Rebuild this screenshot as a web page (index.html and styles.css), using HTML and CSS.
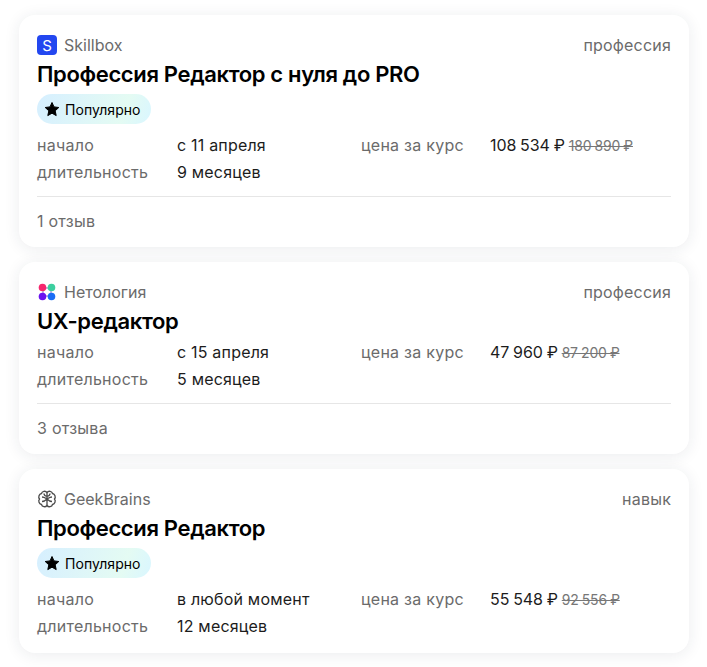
FILE: index.html
```html
<!DOCTYPE html>
<html>
<head>
    <title>Курсы</title>
    <link rel="stylesheet" href="styles.css">
</head>
<body>
    <div class="course-list">
        <div class="card">
            <div class="card-top">
                <div class="school">
                    <svg class="school-logo" viewBox="0 0 20 20">
                        <rect width="20" height="20" rx="4" fill="#2347f0"/>
                        <text x="10" y="15.500" text-anchor="middle" class="logo-letter">S</text>
                    </svg>
                    <span>Skillbox</span>
                </div>
                <div class="course-type">профессия</div>
            </div>
            <h2>Профессия Редактор с нуля до PRO</h2>
            <div class="badge">
                <svg class="star" viewBox="0 0 16 16"><path d="M8 1.500l2 4.400 4.800.6-3.600 3.300 1 4.800L8 12.200l-4.200 2.400 1-4.800L1.200 6.500 6 5.900z"/></svg>
                Популярно
            </div>
            <div class="info">
                <div class="label">начало</div>
                <div class="value">с 11 апреля</div>
                <div class="label">цена за курс</div>
                <div class="price">108 534 ₽ <s class="old-price">180 890 ₽</s></div>
                <div class="label">длительность</div>
                <div class="value">9 месяцев</div>
            </div>
            <div class="reviews">1 отзыв</div>
        </div>

        <div class="card">
            <div class="card-top">
                <div class="school">
                    <svg class="school-logo" viewBox="0 0 20 20">
                        <path d="M6 6h8v8H6z" fill="none" stroke="#8a6bd0" stroke-width="1"/>
                        <circle cx="5.500" cy="5.500" r="3.800" fill="#f5286e"/>
                        <circle cx="14.500" cy="5.500" r="3.800" fill="#3ccf9f"/>
                        <circle cx="5.500" cy="14.500" r="3.800" fill="#6a12f0"/>
                        <circle cx="14.500" cy="14.500" r="3.800" fill="#1a6cf5"/>
                    </svg>
                    <span>Нетология</span>
                </div>
                <div class="course-type">профессия</div>
            </div>
            <h2>UX-редактор</h2>
            <div class="info">
                <div class="label">начало</div>
                <div class="value">с 15 апреля</div>
                <div class="label">цена за курс</div>
                <div class="price">47 960 ₽ <s class="old-price">87 200 ₽</s></div>
                <div class="label">длительность</div>
                <div class="value">5 месяцев</div>
            </div>
            <div class="reviews">3 отзыва</div>
        </div>

        <div class="card">
            <div class="card-top">
                <div class="school">
                    <svg class="school-logo" viewBox="0 0 20 20" fill="none" stroke="#4a4a4a" stroke-width="1.300">
                        <path d="M10 3.500C8.500 1.500 5 2 4.500 4.500 2 5 1 8 2.500 10 1 12 2 15 4.500 15.500 5 18 8.500 18.500 10 16.500 11.500 18.500 15 18 15.500 15.500 18 15 19 12 17.500 10 19 8 18 5 15.500 4.500 15 2 11.500 1.500 10 3.500z"/>
                        <path d="M10 3.500v13M5 8c2 0 3 .8 5 2M15 8c-2 0-3 .8-5 2M5 12.500c1.500 0 3-.5 5-2.500M15 12.500c-1.500 0-3-.5-5-2.500M7 4.500c0 1.500.8 2.300 3 3M13 4.500c0 1.500-.8 2.300-3 3"/>
                    </svg>
                    <span>GeekBrains</span>
                </div>
                <div class="course-type">навык</div>
            </div>
            <h2>Профессия Редактор</h2>
            <div class="badge">
                <svg class="star" viewBox="0 0 16 16"><path d="M8 1.500l2 4.400 4.800.6-3.600 3.300 1 4.800L8 12.200l-4.200 2.400 1-4.800L1.200 6.500 6 5.900z"/></svg>
                Популярно
            </div>
            <div class="info">
                <div class="label">начало</div>
                <div class="value">в любой момент</div>
                <div class="label">цена за курс</div>
                <div class="price">55 548 ₽ <s class="old-price">92 556 ₽</s></div>
                <div class="label">длительность</div>
                <div class="value">12 месяцев</div>
            </div>
        </div>
    </div>
</body>
</html>
```

FILE: styles.css
```css
body {
    font-family: Inter, "Noto Sans", sans-serif;
    margin: 0;
    background-color: #fff;
    color: #1c1c1c;
    font-size: 16px;
}
.course-list {
    display: flex;
    flex-direction: column;
    gap: 15px;
    padding: 15px 18px 14px 19px;
}
.card {
    background-color: #fff;
    border-radius: 16px;
    padding: 20px 18px 16px;
    box-shadow: 0 2px 16px rgba(30, 40, 70, 0.09);
}
.card:last-child {
    padding-bottom: 14px;
}
.card-top {
    display: flex;
    justify-content: space-between;
    align-items: center;
    height: 20px;
    color: #6b6b6b;
}
.school {
    display: flex;
    align-items: center;
    gap: 7px;
}
.school-logo {
    width: 20px;
    height: 20px;
}
.logo-letter {
    fill: #fff;
    font-size: 15px;
    stroke: none;
    font-family: Inter, sans-serif;
}
.course-type {
    letter-spacing: 0.2px;
}
h2 {
    margin: 5px 0 0;
    font-size: 22px;
    line-height: 28px;
    font-weight: 600;
    color: #000;
    letter-spacing: -0.35px;
}
.badge {
    display: flex;
    align-items: center;
    gap: 5px;
    width: fit-content;
    height: 30px;
    margin: 6px 0 7px;
    padding: 0 10px 0 7px;
    border-radius: 15px;
    font-size: 14px;
    letter-spacing: 0.05px;
    color: #000;
    background: linear-gradient(110deg, #d6efff, #e4fbf3 75%, #d9f6ff);
}
.star {
    width: 16px;
    height: 16px;
    stroke: #000;
    stroke-width: 1;
    stroke-linejoin: round;
}
.info {
    display: grid;
    grid-template-columns: 140px 184px 129px 1fr;
    grid-auto-rows: 27px;
    align-items: center;
    margin-top: 3px;
}
.label {
    color: #6b6b6b;
    letter-spacing: 0.25px;
}
.value {
    letter-spacing: 0.2px;
}
.price {
    letter-spacing: -0.1px;
    word-spacing: -0.5px;
}
.old-price {
    font-size: 14px;
    color: #777;
    letter-spacing: -0.2px;
}
.reviews {
    margin-top: 11px;
    padding-top: 14px;
    border-top: 1px solid #e6e6e6;
    color: #6b6b6b;
    line-height: 20px;
    letter-spacing: 0.25px;
}
```
